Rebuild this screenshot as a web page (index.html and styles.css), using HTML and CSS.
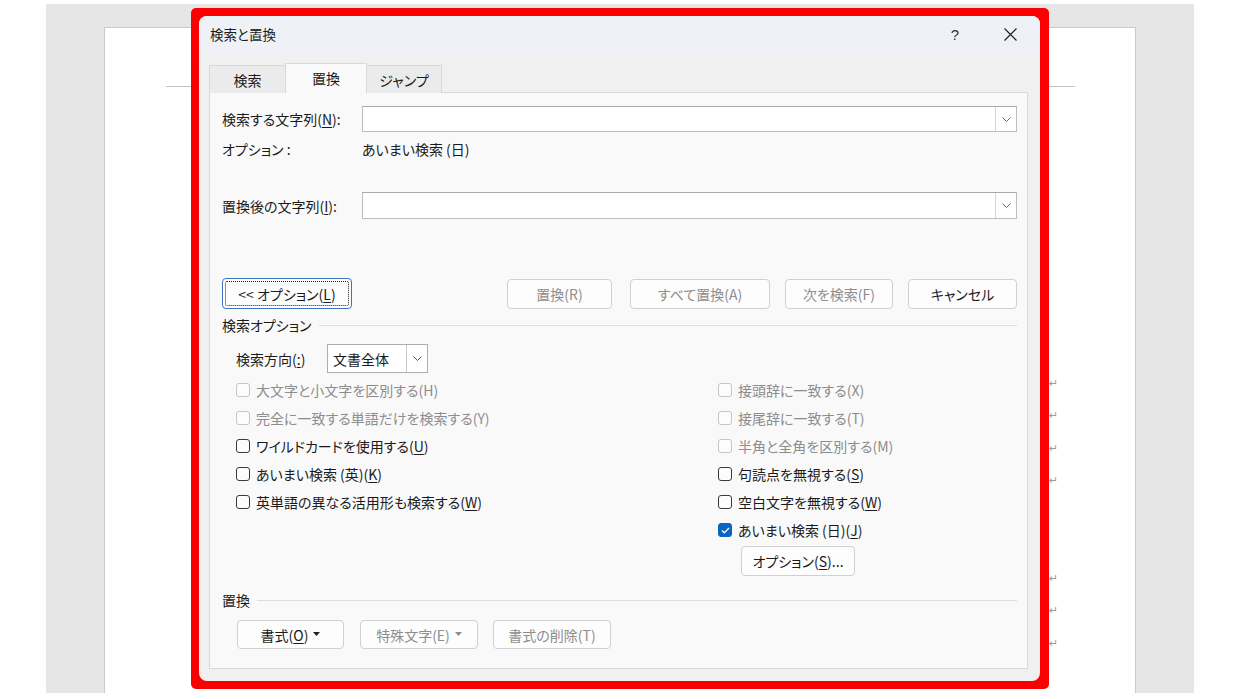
FILE: index.html
```html
<!DOCTYPE html>
<html lang="ja">
<head>
<meta charset="utf-8">
<title>検索と置換</title>
<link rel="stylesheet" href="styles.css">
</head>
<body>
<div class="workspace">
  <div class="page">
    <div class="header-line"></div>
    <div class="marks">
      <div class="mline"><span class="pm">↵</span></div>
      <div class="mline"><span class="pm">↵</span></div>
      <div class="mline"><span class="pm">↵</span></div>
      <div class="mline"><span class="pm">↵</span></div>
      <div class="mline"></div>
      <div class="mline"></div>
      <div class="mline"><span class="pm">↵</span></div>
      <div class="mline"><span class="pm">↵</span></div>
      <div class="mline"><span class="pm">↵</span></div>
    </div>
  </div>
</div>

<div class="frame">
  <div class="dialog">
    <div class="titlebar">
      <span class="title">検索と置換</span>
      <span class="tb-btn help">?</span>
      <span class="tb-btn close">
        <svg width="13" height="13" viewBox="0 0 13 13"><path d="M0.5 0.5 L12.5 12.5 M12.5 0.5 L0.5 12.5" stroke="#222" stroke-width="1.2" fill="none"/></svg>
      </span>
    </div>

    <div class="tabs">
      <div class="tab">検索</div>
      <div class="tab active">置換</div>
      <div class="tab">ジャンプ</div>
    </div>

    <div class="panel">
      <div class="row row-find">
        <span class="lbl">検索する文字列(<u>N</u>):</span>
        <div class="combo">
          <span class="drop"><svg width="9" height="5" viewBox="0 0 9 5"><polyline points="0.5,0.5 4.5,4.5 8.5,0.5" stroke="#666" fill="none" stroke-width="1"/></svg></span>
        </div>
      </div>
      <div class="row row-opt">
        <span class="lbl">オプション :</span>
        <span>あいまい検索 (日)</span>
      </div>
      <div class="row row-rep">
        <span class="lbl">置換後の文字列(<u>I</u>):</span>
        <div class="combo">
          <span class="drop"><svg width="9" height="5" viewBox="0 0 9 5"><polyline points="0.5,0.5 4.5,4.5 8.5,0.5" stroke="#666" fill="none" stroke-width="1"/></svg></span>
        </div>
      </div>

      <div class="row row-btns">
        <div class="btn focus w-opt">&lt;&lt; オプション(<u>L</u>)</div>
        <div class="btn-group">
          <div class="btn disabled w-rep">置換(R)</div>
          <div class="btn disabled w-all">すべて置換(A)</div>
          <div class="btn disabled w-next">次を検索(F)</div>
          <div class="btn w-cancel">キャンセル</div>
        </div>
      </div>

      <div class="section sec-search">
        <span>検索オプション</span>
        <span class="sline"></span>
      </div>

      <div class="row row-dir">
        <span class="dir-lbl">検索方向(<u>:</u>)</span>
        <div class="select">
          <span class="sel-text">文書全体</span>
          <span class="sel-drop"><svg width="9" height="5" viewBox="0 0 9 5"><polyline points="0.5,0.5 4.5,4.5 8.5,0.5" stroke="#555" fill="none" stroke-width="1"/></svg></span>
        </div>
      </div>

      <div class="opts">
        <div class="col col-left">
          <div class="chk disabled"><span class="box"></span>大文字と小文字を区別する(H)</div>
          <div class="chk disabled"><span class="box"></span>完全に一致する単語だけを検索する(Y)</div>
          <div class="chk"><span class="box"></span>ワイルドカードを使用する(<u>U</u>)</div>
          <div class="chk"><span class="box"></span>あいまい検索 (英)(<u>K</u>)</div>
          <div class="chk"><span class="box"></span>英単語の異なる活用形も検索する(<u>W</u>)</div>
        </div>
        <div class="col col-right">
          <div class="chk disabled"><span class="box"></span>接頭辞に一致する(X)</div>
          <div class="chk disabled"><span class="box"></span>接尾辞に一致する(T)</div>
          <div class="chk disabled"><span class="box"></span>半角と全角を区別する(M)</div>
          <div class="chk"><span class="box"></span>句読点を無視する(<u>S</u>)</div>
          <div class="chk"><span class="box"></span>空白文字を無視する(<u>W</u>)</div>
          <div class="chk"><span class="box checked"><svg width="9" height="7" viewBox="0 0 9 7"><polyline points="1,3.5 3.3,5.8 8,1" stroke="#fff" stroke-width="1.3" fill="none"/></svg></span>あいまい検索 (日)(<u>J</u>)</div>
          <div class="btn w-optS">オプション(<u>S</u>)...</div>
        </div>
      </div>

      <div class="section sec-rep">
        <span>置換</span>
        <span class="sline"></span>
      </div>

      <div class="row row-bottom">
        <div class="btn w-fmt">書式(<u>O</u>)<svg class="tri" width="7" height="4" viewBox="0 0 7 4"><polygon points="0,0 7,0 3.5,4" fill="#222"/></svg></div>
        <div class="btn disabled w-sp">特殊文字(E)<svg class="tri" width="7" height="4" viewBox="0 0 7 4"><polygon points="0,0 7,0 3.5,4" fill="#8d8d8d"/></svg></div>
        <div class="btn disabled w-del">書式の削除(T)</div>
      </div>
    </div>
  </div>
</div>
</body>
</html>
```

FILE: styles.css
```css
* { box-sizing: border-box; }

body {
  margin: 0;
  width: 1241px;
  height: 699px;
  overflow: hidden;
  background: #ffffff;
  font-family: "Noto Sans CJK JP", sans-serif;
  font-size: 14px;
  color: #1b1b1b;
  font-feature-settings: "palt";
}

u { text-decoration: underline; text-underline-offset: 2px; }

/* ---------- document behind ---------- */
.workspace {
  margin: 4px 0 0 46px;
  width: 1148px;
  height: 689px;
  background: #e6e6e6;
  padding: 23px 0 0 58px;
}

.page {
  width: 1032px;
  height: 666px;
  background: #ffffff;
  border: 1px solid #cacaca;
  border-bottom: none;
  padding: 58px 0 0 61px;
}

.header-line {
  width: 909px;
  height: 1px;
  background: #c4c4c4;
}

.marks {
  margin-top: 280px;
  margin-left: 883px;
  display: flex;
  flex-direction: column;
}

.mline {
  height: 32.5px;
  display: flex;
  align-items: center;
}

.pm {
  font-family: "DejaVu Sans", sans-serif;
  font-size: 11px;
  color: #9a9a9a;
  line-height: 1;
}

/* ---------- dialog ---------- */
.frame {
  position: absolute;
  left: 191px;
  top: 8px;
  width: 858px;
  height: 681px;
  background: #fa0000;
  border-radius: 5px;
  padding: 8px 9px 8px 8px;
}

.dialog {
  width: 100%;
  height: 100%;
  background: #f0f0f0;
  border-radius: 8px;
  overflow: hidden;
  display: flex;
  flex-direction: column;
}

.titlebar {
  height: 37px;
  flex: none;
  background: #eef2f7;
  display: flex;
  align-items: center;
  padding: 0 7px 0 11px;
}

.title {
  font-size: 13.5px;
  line-height: 20px;
  flex: 1;
  margin-top: -2px;
}

.tb-btn {
  width: 46px;
  height: 37px;
  display: flex;
  align-items: center;
  justify-content: center;
}

.help {
  font-family: "Liberation Sans", sans-serif;
  font-size: 15px;
  color: #333;
  margin-right: 9px;
}

.tabs {
  margin-top: 10px;
  padding-left: 10px;
  height: 30px;
  margin-bottom: -1px;
  display: flex;
  align-items: flex-end;
  position: relative;
  z-index: 1;
  flex: none;
}

.tab {
  height: 28px;
  border: 1px solid #d9d9d9;
  border-bottom: none;
  background: #ebebeb;
  display: flex;
  align-items: center;
  justify-content: center;
  line-height: 20px;
}

.tab:nth-child(1) { width: 76px; border-right: none; }
.tab:nth-child(3) { width: 75px; border-left: none; }

.tab.active {
  width: 82px;
  height: 30px;
  background: #f9f9f9;
  padding-bottom: 2px;
}

.panel {
  flex: 1;
  margin: 0 12px 12px 10px;
  background: #f9f9f9;
  border: 1px solid #d9d9d9;
  padding: 0 10px 0 12px;
  display: flex;
  flex-direction: column;
}

.row {
  display: flex;
  align-items: center;
  flex: none;
  line-height: 20px;
}

.lbl { width: 140px; flex: none; }

.row-find { margin-top: 13px; height: 26px; }
.row-opt  { margin-top: 7px;  height: 20px; }
.row-rep  { margin-top: 33px; height: 27px; }

.combo {
  flex: 1;
  height: 100%;
  background: #ffffff;
  border: 1px solid #bdbdbd;
  border-top-color: #a9a9a9;
  display: flex;
  justify-content: flex-end;
}

.drop {
  width: 21px;
  height: 100%;
  border-left: 1px solid #d6d6d6;
  display: flex;
  align-items: center;
  justify-content: center;
}

/* buttons */
.btn {
  height: 30px;
  background: #fdfdfd;
  border: 1px solid #d0d0d0;
  border-radius: 4px;
  display: flex;
  align-items: center;
  justify-content: center;
  line-height: 20px;
  flex: none;
}

.btn.disabled { color: #8d8d8d; }

.btn.focus {
  position: relative;
  border: 1px solid #3d74c0;
  height: 31px;
}

.btn.focus::after {
  content: "";
  position: absolute;
  inset: 2px;
  border: 1px dotted #222;
  border-radius: 2px;
}

.row-btns { margin-top: 59px; height: 31px; justify-content: space-between; }
.btn-group { display: flex; }
.w-opt { width: 130px; }
.w-rep { width: 105px; }
.w-all { width: 140px; margin-left: 18px; }
.w-next { width: 108px; margin-left: 15px; }
.w-cancel { width: 109px; margin-left: 15px; }

/* sections */
.section {
  display: flex;
  align-items: center;
  height: 20px;
  line-height: 20px;
  flex: none;
}

.sline {
  flex: 1;
  height: 1px;
  background: #dedede;
  margin-left: 7px;
}

.sec-search { margin-top: 6px; }

.row-dir { margin-top: 9px; height: 29px; padding-left: 14px; }
.dir-lbl { width: 91px; flex: none; }

.select {
  width: 101px;
  height: 29px;
  background: #ffffff;
  border: 1px solid #adadad;
  display: flex;
  align-items: center;
}

.sel-text { flex: 1; padding-left: 5px; }

.sel-drop {
  width: 21px;
  height: 100%;
  border-left: 1px solid #c8c8c8;
  display: flex;
  align-items: center;
  justify-content: center;
}

/* options */
.opts {
  margin-top: 3px;
  display: flex;
  flex: none;
}

.col { display: flex; flex-direction: column; }
.col-left { width: 496px; padding-left: 14px; }

.chk {
  height: 28px;
  display: flex;
  align-items: center;
  line-height: 20px;
  white-space: nowrap;
}

.chk .box {
  width: 14px;
  height: 14px;
  border: 1px solid #3a3a3a;
  border-radius: 3px;
  background: #fcfcfc;
  margin-right: 6px;
  flex: none;
  display: flex;
  align-items: center;
  justify-content: center;
}

.chk.disabled { color: #8d8d8d; }
.chk.disabled .box { border-color: #c6c6c6; }

.chk .box.checked {
  background: #0a64c2;
  border-color: #0a64c2;
}

.w-optS { width: 114px; margin-left: 23px; margin-top: 2px; }

.sec-rep { margin-top: 14px; }

.row-bottom { margin-top: 10px; height: 29px; padding-left: 15px; }
.row-bottom .btn { height: 29px; }
.w-fmt { width: 107px; }
.w-sp { width: 118px; margin-left: 16px; }
.w-del { width: 118px; margin-left: 15px; }

.tri { margin-left: 5px; margin-top: -2px; }
```
